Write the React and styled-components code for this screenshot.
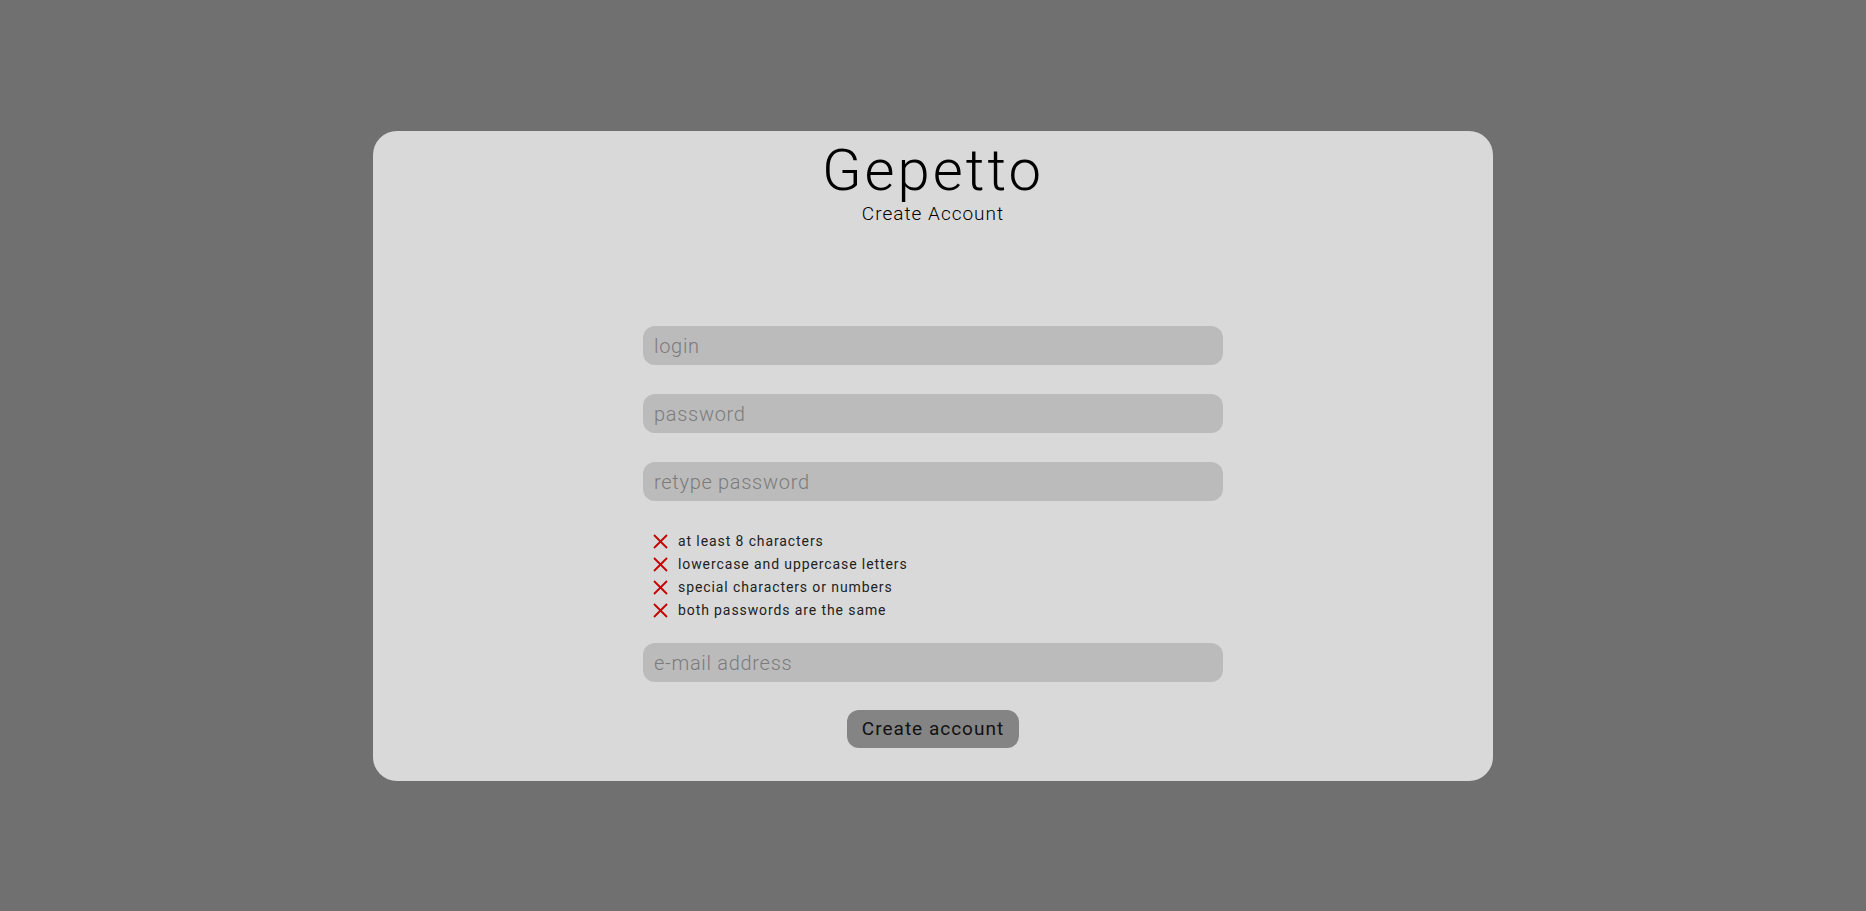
import React from "react";
import styled, { createGlobalStyle } from "styled-components";

const GlobalStyle = createGlobalStyle`
  html, body {
    margin: 0;
    height: 100%;
    background-color: #707070;
    font-family: Roboto, "Noto Sans", sans-serif;
  }
  #root {
    height: 100%;
  }
`;

const rules = [
  "at least 8 characters",
  "lowercase and uppercase letters",
  "special characters or numbers",
  "both passwords are the same",
];

const CrossIcon = () => (
  <svg width="15" height="15" viewBox="0 0 15 15">
    <path d="M1 1 L14 14 M14 1 L1 14" stroke="#c40000" strokeWidth="1.8" fill="none" />
  </svg>
);

const App = () => {
  return (
    <Root>
      <GlobalStyle />
      <Card>
        <Header>
          <Title>Gepetto</Title>
          <Subtitle>Create Account</Subtitle>
        </Header>
        <Form onSubmit={(e) => e.preventDefault()}>
          <Field type="text" placeholder="login" />
          <Field type="password" placeholder="password" />
          <Field type="password" placeholder="retype password" />
          <RuleList>
            {rules.map((rule) => (
              <Rule key={rule}>
                <CrossIcon />
                <span>{rule}</span>
              </Rule>
            ))}
          </RuleList>
          <Field type="email" placeholder="e-mail address" />
          <SubmitButton type="submit">Create account</SubmitButton>
        </Form>
      </Card>
    </Root>
  );
};

export default App;

const Root = styled.div`
  display: flex;
  align-items: center;
  justify-content: center;
  height: 100%;
`;

const Card = styled.div`
  display: flex;
  flex-direction: column;
  align-items: center;
  box-sizing: border-box;
  width: 1120px;
  height: 650px;
  background-color: #d9d9d9;
  border-radius: 24px;
`;

const Header = styled.div`
  display: flex;
  flex-direction: column;
  align-items: center;
  padding-top: 6px;
`;

const Title = styled.h1`
  margin: 0;
  font-weight: 300;
  font-size: 58px;
  line-height: 66px;
  letter-spacing: 3px;
  color: #000;
`;

const Subtitle = styled.p`
  margin: 0;
  font-weight: 300;
  font-size: 19px;
  line-height: 22px;
  letter-spacing: 1px;
  color: #000;
`;

const Form = styled.form`
  display: flex;
  flex-direction: column;
  align-items: center;
  width: 580px;
  margin-top: 101px;
`;

const Field = styled.input`
  box-sizing: border-box;
  width: 100%;
  height: 39px;
  margin-bottom: 29px;
  padding: 1px 11px 0;
  border: none;
  border-radius: 12px;
  outline: none;
  background-color: #bbbbbb;
  font-family: Roboto, "Noto Sans", sans-serif;
  font-size: 20px;
  font-weight: 300;
  letter-spacing: 0.7px;
  color: #333;

  &::placeholder {
    color: #7b7b7b;
  }
`;

const RuleList = styled.ul`
  align-self: stretch;
  display: flex;
  flex-direction: column;
  gap: 4px;
  margin: 2px 0 23px;
  padding: 0 0 0 10px;
  list-style: none;
`;

const Rule = styled.li`
  display: flex;
  align-items: center;
  gap: 10px;
  height: 19px;
  font-size: 14px;
  letter-spacing: 0.9px;
  color: #222;
`;

const SubmitButton = styled.button`
  height: 38px;
  padding: 0 15px;
  margin-top: -1px;
  border: none;
  border-radius: 12px;
  background-color: #848484;
  font-family: Roboto, "Noto Sans", sans-serif;
  font-size: 19px;
  font-weight: 400;
  letter-spacing: 1px;
  color: #111;
  cursor: pointer;
`;
